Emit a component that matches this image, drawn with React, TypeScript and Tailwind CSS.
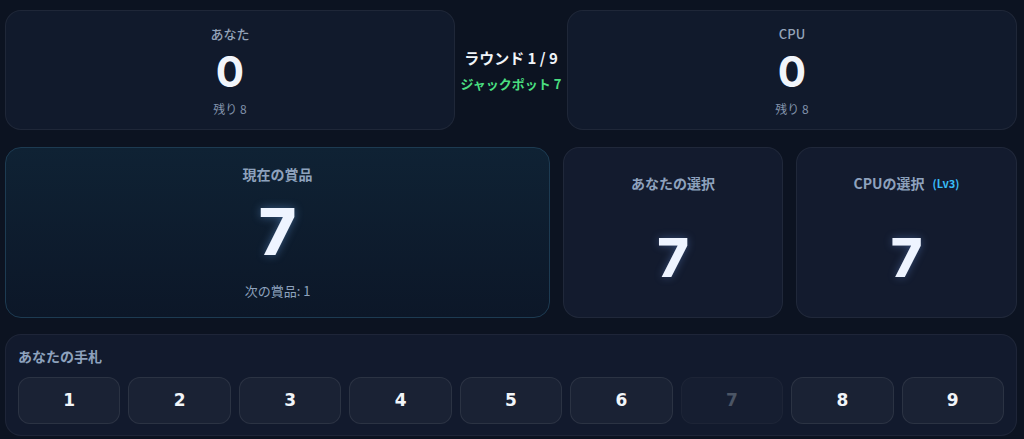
const jp = { fontFamily: '"Noto Sans CJK JP", "Noto Sans", sans-serif' };

const ScoreCard = ({ label, score, left }: { label: string; score: number; left: number }) => (
  <div className="h-[120px] rounded-2xl border border-white/[0.06] bg-[#111a2c] flex flex-col items-center">
    <div className="mt-[13px] text-[13px] leading-[20px] font-medium text-[#94a3b8]">{label}</div>
    <div className="mt-[4px] text-[42px] leading-[48px] font-bold text-[#f1f5fb]" style={{ fontFamily: 'Inter, sans-serif' }}>
      {score}
    </div>
    <div className="mt-[4px] text-[12px] leading-[18px] text-[#8293ab]">残り {left}</div>
  </div>
);

const ChoiceCard = ({ title, tag, value }: { title: string; tag?: string; value: number }) => (
  <div className="rounded-2xl border border-white/[0.06] bg-[#131b2e] flex flex-col items-center">
    <div className="mt-[25px] flex items-center gap-[8px]">
      <span className="text-[14px] leading-[20px] font-semibold text-[#8ea2bd]">{title}</span>
      {tag && <span className="text-[11px] font-bold text-[#38bdf8]">{tag}</span>}
    </div>
    <div
      className="mt-[35px] text-[54px] leading-[60px] font-extrabold text-[#eef4ff]"
      style={{ fontFamily: 'Inter, sans-serif', textShadow: '0 0 8px rgba(120,170,255,0.35)' }}
    >
      {value}
    </div>
  </div>
);

export default function App() {
  const hand = [1, 2, 3, 4, 5, 6, 7, 8, 9];
  const used = [7];

  return (
    <div className="w-[1024px] h-[439px] bg-[#0c1321] overflow-hidden" style={jp}>
      <div className="ml-[5px] w-[1012px] pt-[10px] flex flex-col gap-[16px]">
        {/* スコア */}
        <div className="grid grid-cols-[450px_1fr_450px] items-center">
          <ScoreCard label="あなた" score={0} left={8} />
          <div className="flex flex-col items-center">
            <div className="text-[15px] leading-[22px] font-bold text-[#f1f5f9]">ラウンド 1 / 9</div>
            <div className="mt-[6px] text-[13px] leading-[18px] font-bold text-[#4ade80]">ジャックポット 7</div>
          </div>
          <ScoreCard label="CPU" score={0} left={8} />
        </div>

        {/* 賞品と選択 */}
        <div className="mt-[1px] grid grid-cols-[545px_220px_221px] gap-[13px] h-[171px]">
          <div className="rounded-2xl border border-[#1d3b52] bg-gradient-to-b from-[#0f2234] to-[#0c1728] flex flex-col items-center">
            <div className="mt-[16px] text-[14px] leading-[20px] font-semibold text-[#8ea2bd]">現在の賞品</div>
            <div
              className="mt-[12px] text-[64px] leading-[72px] font-extrabold text-[#eef4ff]"
              style={{ fontFamily: 'Inter, sans-serif', textShadow: '0 0 10px rgba(120,180,255,0.4)' }}
            >
              7
            </div>
            <div className="mt-[14px] text-[13px] leading-[18px] text-[#8ea2bd]">次の賞品: 1</div>
          </div>
          <ChoiceCard title="あなたの選択" value={7} />
          <ChoiceCard title="CPUの選択" tag="(Lv3)" value={7} />
        </div>

        {/* 手札 */}
        <div className="h-[102px] rounded-2xl border border-white/[0.05] bg-[#121a2d] px-[12px] pt-[11px]">
          <div className="text-[14px] leading-[20px] font-semibold text-[#8ea2bd]">あなたの手札</div>
          <div className="mt-[11px] grid grid-cols-9 gap-[8px]">
            {hand.map((n) => {
              const off = used.includes(n);
              return (
                <button
                  key={n}
                  className={`h-[47px] rounded-xl border text-[17px] font-bold ${
                    off
                      ? 'border-white/[0.03] bg-white/[0.02] text-[#4b5565]'
                      : 'border-white/[0.08] bg-[#1a2234] text-[#f1f5f9]'
                  }`}
                  style={{ fontFamily: '"DejaVu Sans", sans-serif' }}
                >
                  {n}
                </button>
              );
            })}
          </div>
        </div>
      </div>
    </div>
  );
}
